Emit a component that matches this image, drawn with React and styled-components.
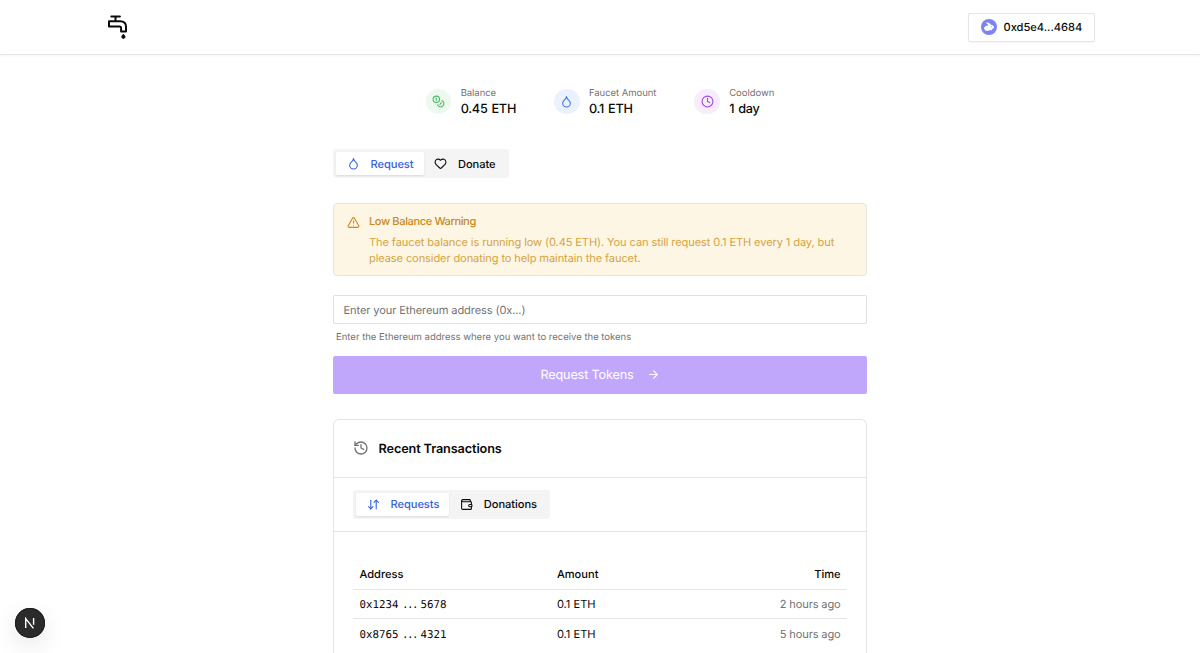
import React, { useState } from 'react';
import styled, { createGlobalStyle } from 'styled-components';
import {
    ArrowDownUp,
    ArrowRight,
    Clock,
    Coins,
    Droplet,
    Heart,
    History,
    TriangleAlert,
    Wallet,
} from 'lucide-react';

const transactions = {
    requests: [
        { from: '0x1234', to: '5678', amount: '0.1 ETH', time: '2 hours ago' },
        { from: '0x8765', to: '4321', amount: '0.1 ETH', time: '5 hours ago' },
    ],
    donations: [],
};

function FaucetLogo() {
    return (
        <svg width="22" height="26" viewBox="0 0 22 26" fill="none" stroke="#0a0a0a" strokeWidth="2">
            <path d="M4.3 2.5h8.6M8.5 2.5v4" strokeLinecap="round" />
            <path
                d="M2 7.3h11.2c3.6 0 5.8 2.2 5.8 5.6v4.6h-4.9v-3.3c0-1-.6-1.6-1.6-1.6H2z"
                strokeLinejoin="round"
            />
            <path d="M16.4 20.2c1 1.1 1.6 1.8 1.6 2.6a1.6 1.6 0 0 1-3.2 0c0-.8.6-1.5 1.6-2.6z" fill="#0a0a0a" strokeWidth="1" />
        </svg>
    );
}

function RabbitAvatar() {
    return (
        <svg width="16" height="16" viewBox="0 0 16 16">
            <circle cx="8" cy="8" r="8" fill="#7c84f2" />
            <path
                d="M5.4 3.5c2-.3 3.9.7 4.5 2.3 1.9.2 3.2 1.4 3.2 2.7 0 .9-1.2 1.3-2.3 1.4l.6 1.3H9.9l-.7-.8-.9 1.4H5c-.8 0-1-.6-.6-1-1-.1-1.5-.8-1.4-1.5.1-1.8 2-2.5 4.3-2.8C6.9 5.3 6 4.7 5.2 4.3c-.4-.2-.2-.7.2-.8z"
                fill="#fff"
            />
            <circle cx="10.6" cy="7.7" r=".5" fill="#7c84f2" />
        </svg>
    );
}

function App() {
    const [mode, setMode] = useState('request');
    const [list, setList] = useState('requests');

    return (
        <>
            <GlobalStyle />
            <Header>
                <HeaderInner>
                    <FaucetLogo />
                    <AccountButton>
                        <RabbitAvatar />
                        0xd5e4...4684
                    </AccountButton>
                </HeaderInner>
            </Header>

            <Main>
                <Stats>
                    <Stat>
                        <StatIcon $color="#4fb866" $bg="#edf9ef"><Coins size={13} /></StatIcon>
                        <div>
                            <StatLabel>Balance</StatLabel>
                            <StatValue>0.45 ETH</StatValue>
                        </div>
                    </Stat>
                    <Stat>
                        <StatIcon $color="#4170e8" $bg="#ebf2fe"><Droplet size={13} /></StatIcon>
                        <div>
                            <StatLabel>Faucet Amount</StatLabel>
                            <StatValue>0.1 ETH</StatValue>
                        </div>
                    </Stat>
                    <Stat>
                        <StatIcon $color="#a445e8" $bg="#f6ecfe"><Clock size={13} /></StatIcon>
                        <div>
                            <StatLabel>Cooldown</StatLabel>
                            <StatValue>1 day</StatValue>
                        </div>
                    </Stat>
                </Stats>

                <TabList>
                    <Tab $active={mode === 'request'} onClick={() => setMode('request')}>
                        <Droplet size={13} />
                        Request
                    </Tab>
                    <Tab $active={mode === 'donate'} onClick={() => setMode('donate')}>
                        <Heart size={13} />
                        Donate
                    </Tab>
                </TabList>

                <Warning>
                    <TriangleAlert size={13} />
                    <div>
                        <WarningTitle>Low Balance Warning</WarningTitle>
                        <WarningText>
                            The faucet balance is running low (0.45 ETH). You can still request 0.1 ETH every
                            1 day, but please consider donating to help maintain the faucet.
                        </WarningText>
                    </div>
                </Warning>

                <AddressInput placeholder="Enter your Ethereum address (0x...)" />
                <Hint>Enter the Ethereum address where you want to receive the tokens</Hint>
                <SubmitButton>
                    Request Tokens
                    <ArrowRight size={13} />
                </SubmitButton>

                <Card>
                    <CardHeader>
                        <History size={16} />
                        <CardTitle>Recent Transactions</CardTitle>
                    </CardHeader>
                    <CardTabs>
                        <TabList>
                            <Tab $active={list === 'requests'} onClick={() => setList('requests')}>
                                <ArrowDownUp size={13} />
                                Requests
                            </Tab>
                            <Tab $active={list === 'donations'} onClick={() => setList('donations')}>
                                <Wallet size={13} />
                                Donations
                            </Tab>
                        </TabList>
                    </CardTabs>
                    <Table>
                        <HeadRow>
                            <span>Address</span>
                            <span>Amount</span>
                            <span>Time</span>
                        </HeadRow>
                        {transactions[list].map((tx) => (
                            <Row key={tx.from}>
                                <Address>
                                    <span>{tx.from}</span>
                                    <Dots>...</Dots>
                                    <span>{tx.to}</span>
                                </Address>
                                <span>{tx.amount}</span>
                                <Time>{tx.time}</Time>
                            </Row>
                        ))}
                    </Table>
                </Card>
            </Main>

            <DevBadge>
                <svg width="12" height="12" viewBox="0 0 12 12" fill="none" stroke="#fff" strokeWidth="1.4">
                    <path d="M1.7 11V1.6L9.4 11.4" />
                    <path d="M9.6 1v6.8" />
                </svg>
            </DevBadge>
        </>
    );
}

export default App;

const GlobalStyle = createGlobalStyle`
    * {
        box-sizing: border-box;
    }
    body {
        margin: 0;
        height: 100vh;
        overflow: hidden;
        background: #fff;
        color: #0a0a0a;
        font-family: Inter, "Liberation Sans", sans-serif;
        font-size: 11.1px;
        text-rendering: geometricPrecision;
    }
    button, input {
        font-family: inherit;
        text-rendering: inherit;
    }
    svg {
        flex-shrink: 0;
    }
`;

const Header = styled.header`
    height: 55px;
    border-bottom: 1px solid #e5e5e5;
    box-shadow: 0 1px 2px rgba(0, 0, 0, 0.04);
`;

const HeaderInner = styled.div`
    width: 990px;
    height: 54px;
    margin: 0 auto;
    padding-left: 2px;
    display: flex;
    align-items: center;
    justify-content: space-between;
`;

const AccountButton = styled.button`
    display: flex;
    align-items: center;
    gap: 6.5px;
    width: 127.5px;
    height: 29px;
    padding: 0 12.5px;
    border: 1px solid #e5e5e5;
    border-radius: 2px;
    background: #fff;
    box-shadow: 0 1px 2px rgba(0, 0, 0, 0.04);
    color: #0a0a0a;
    font-size: 11.1px;
    font-weight: 500;
    white-space: nowrap;
`;

const Main = styled.main`
    width: 534px;
    margin: 0 auto;
    padding-top: 31px;
`;

const Stats = styled.div`
    display: flex;
    justify-content: center;
    gap: 38px;
    height: 32px;
    margin-bottom: 31.3px;
`;

const Stat = styled.div`
    display: flex;
    align-items: center;
    gap: 9.5px;
`;

const StatIcon = styled.div`
    display: flex;
    align-items: center;
    justify-content: center;
    width: 25.4px;
    height: 25.4px;
    margin-bottom: 1px;
    border-radius: 50%;
    background: ${(props) => props.$bg};
    color: ${(props) => props.$color};
`;

const StatLabel = styled.div`
    padding-top: 2px;
    color: #737373;
    font-size: 9.5px;
    line-height: 13px;
    letter-spacing: -0.05px;
`;

const StatValue = styled.div`
    font-size: 12.7px;
    font-weight: 500;
    line-height: 19px;
    letter-spacing: -0.25px;
    word-spacing: 0.8px;
`;

const TabList = styled.div`
    display: inline-flex;
    height: 28.5px;
    padding: 3px;
    border-radius: 3px;
    background: #f4f4f4;
`;

const Tab = styled.button`
    display: flex;
    align-items: center;
    gap: 11px;
    padding: 0 10px 0 10.5px;
    border: none;
    border-radius: 2px;
    background: ${(props) => (props.$active ? '#fff' : 'transparent')};
    box-shadow: ${(props) => (props.$active ? '0 1px 2px rgba(0, 0, 0, 0.1)' : 'none')};
    color: ${(props) => (props.$active ? '#3563dc' : '#0a0a0a')};
    font-size: 11.1px;
    font-weight: 500;
    letter-spacing: -0.05px;
`;

const Warning = styled.div`
    display: flex;
    gap: 9.5px;
    height: 73px;
    margin-top: 25px;
    padding: 11.5px 12.5px;
    border: 1px solid #e8e5dc;
    border-radius: 4px;
    background: #fdf6e5;
    color: #c98a1b;

    > svg {
        margin-top: 1px;
    }
`;

const WarningTitle = styled.div`
    font-weight: 500;
    line-height: 12px;
    letter-spacing: -0.4px;
`;

const WarningText = styled.div`
    margin-top: 6.5px;
    color: #d5a440;
    line-height: 16px;
    letter-spacing: -0.12px;
`;

const AddressInput = styled.input`
    display: block;
    width: 100%;
    height: 29px;
    margin-top: 19px;
    padding: 1px 9.5px 0;
    border: 1px solid #e0e0e0;
    border-radius: 2px;
    font-size: 11.1px;
    letter-spacing: -0.12px;

    &::placeholder {
        color: #737373;
    }
`;

const Hint = styled.p`
    margin: 7.3px 0 0 3px;
    color: #737373;
    font-size: 9.5px;
    line-height: 13px;
`;

const SubmitButton = styled.button`
    display: flex;
    align-items: center;
    justify-content: center;
    gap: 13px;
    width: 100%;
    height: 38px;
    margin-top: 11.8px;
    padding-top: 2px;
    border: none;
    border-radius: 2px;
    background: #c1a7fc;
    color: #fff;
    font-size: 12.7px;
    letter-spacing: -0.17px;

    > svg {
        margin-bottom: 2px;
    }
`;

const Card = styled.section`
    margin-top: 25.1px;
    height: 234px;
    border: 1px solid #e5e5e5;
    border-bottom: none;
    border-radius: 6px 6px 0 0;
`;

const CardHeader = styled.div`
    display: flex;
    align-items: center;
    gap: 9.5px;
    height: 58px;
    padding: 0 19px;
    border-bottom: 1px solid #e5e5e5;

    > svg {
        margin-bottom: 1px;
        color: #737373;
    }
`;

const CardTitle = styled.h2`
    margin: 0;
    padding-top: 2px;
    font-size: 12.7px;
    font-weight: 600;
    letter-spacing: -0.12px;
`;

const CardTabs = styled.div`
    display: flex;
    align-items: center;
    height: 54px;
    padding: 0 19px;
    border-bottom: 1px solid #e5e5e5;
`;

const Table = styled.div`
    padding: 27px 19px 0;
`;

const Row = styled.div`
    display: grid;
    grid-template-columns: 197.5px 1fr auto;
    align-items: center;
    height: 29.4px;
    padding: 0 6.4px;
    border-bottom: 1px solid #e5e5e5;

    &:last-child {
        border-bottom: none;
    }
`;

const HeadRow = styled(Row)`
    height: 31px;
    font-weight: 500;
`;

const Address = styled.div`
    display: flex;
    gap: 3.5px;
    font-family: "DejaVu Sans Mono", monospace;
    font-size: 10.8px;
`;

const Dots = styled.span`
    letter-spacing: -1.5px;
`;

const Time = styled.span`
    color: #737373;
    letter-spacing: -0.15px;
`;

const DevBadge = styled.div`
    position: fixed;
    left: 15px;
    bottom: 15px;
    display: flex;
    align-items: center;
    justify-content: center;
    width: 30px;
    height: 30px;
    border-radius: 50%;
    background: #2b2b2b;
    box-shadow: 0 0 0 1px #1c1c1c inset, 0 8px 24px rgba(0, 0, 0, 0.1);
`;
